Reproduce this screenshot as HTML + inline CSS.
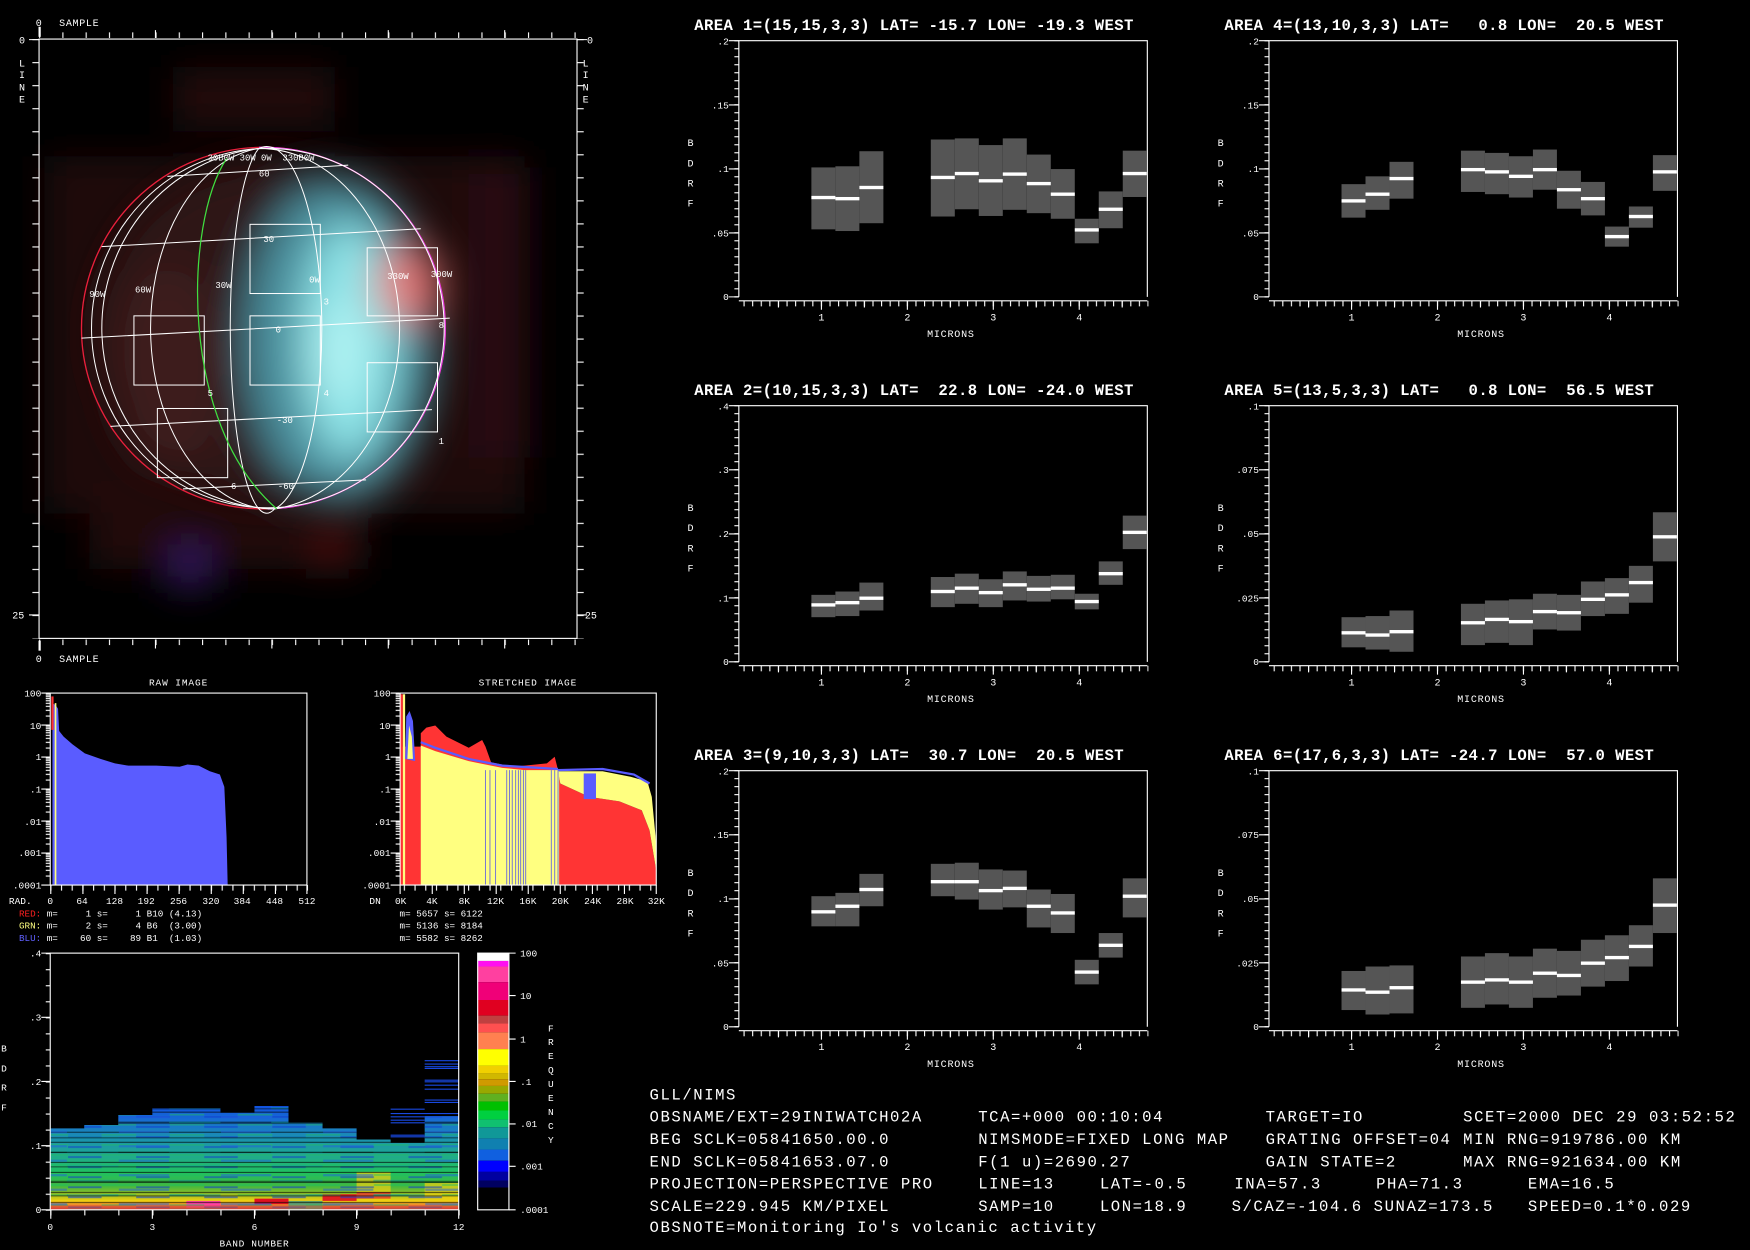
<!DOCTYPE html>
<html><head><meta charset="utf-8"><style>
html,body{margin:0;padding:0;background:#000;width:1750px;height:1250px;overflow:hidden}
svg{display:block}
text{font-family:"Liberation Mono","DejaVu Sans Mono",monospace;fill:#fff;white-space:pre}
</style></head><body>
<svg width="1750" height="1250" viewBox="0 0 1568 1120" xmlns="http://www.w3.org/2000/svg">
<defs>
<pattern id="pxt" x="666.2" y="0" width="7.7" height="400" patternUnits="userSpaceOnUse"><rect width="1" height="400" fill="#fff"/></pattern>
<pattern id="pyt" x="0" y="36" width="20" height="7.17" patternUnits="userSpaceOnUse"><rect width="20" height="1" fill="#fff"/></pattern>
<pattern id="ilt" x="0" y="35" width="20" height="20.64" patternUnits="userSpaceOnUse"><rect width="20" height="1" fill="#fff"/></pattern>
<pattern id="itt" x="35" y="0" width="20.86" height="600" patternUnits="userSpaceOnUse"><rect width="1" height="600" fill="#fff"/></pattern>
<pattern id="dlt" x="0" y="854" width="20" height="14.37" patternUnits="userSpaceOnUse"><rect width="20" height="1" fill="#fff"/></pattern>
<pattern id="dxt" x="45" y="0" width="30.5" height="1200" patternUnits="userSpaceOnUse"><rect width="1" height="1200" fill="#fff"/></pattern>
<pattern id="xt8" x="45" y="0" width="9.6" height="900" patternUnits="userSpaceOnUse"><rect width="1" height="900" fill="#fff"/></pattern>
<pattern id="lg" x="0" y="621" width="20" height="28.67" patternUnits="userSpaceOnUse"><g fill="#fff"><rect y="0" width="20" height="1"/><rect y="1.3" width="20" height="1"/><rect y="2.8" width="20" height="1"/><rect y="4.5" width="20" height="1"/><rect y="6.4" width="20" height="1"/><rect y="8.7" width="20" height="1"/><rect y="11.4" width="20" height="1"/><rect y="15" width="20" height="1"/><rect y="20.1" width="20" height="1"/></g></pattern>
<pattern id="st1" x="0" y="850" width="61" height="9" patternUnits="userSpaceOnUse"><rect y="2" width="61" height="1" fill="#000" opacity=".6"/><rect y="6" width="30" height="1.5" fill="#1040d0" opacity=".6"/><rect x="30" y="4" width="31" height="1.5" fill="#20c060" opacity=".5"/></pattern>
<pattern id="st2" x="15" y="853" width="91.5" height="13" patternUnits="userSpaceOnUse"><rect y="4" width="45" height="2" fill="#2060e0" opacity=".5"/><rect x="45" y="9" width="46" height="2" fill="#10a0a0" opacity=".5"/><rect y="10" width="91.5" height="1" fill="#000" opacity=".5"/></pattern>
<linearGradient id="dg" gradientUnits="userSpaceOnUse" x1="0" y1="950" x2="0" y2="1084">
<stop offset="0" stop-color="#1040e0"/><stop offset=".30" stop-color="#1050e0"/><stop offset=".41" stop-color="#1870d0"/><stop offset=".52" stop-color="#1a90b0"/><stop offset=".63" stop-color="#20a890"/><stop offset=".75" stop-color="#20c060"/><stop offset=".84" stop-color="#40b840"/><stop offset=".90" stop-color="#a0c020"/><stop offset=".94" stop-color="#f0d010"/><stop offset=".97" stop-color="#f08030"/><stop offset="1" stop-color="#e02040"/>
</linearGradient>
<clipPath id="dcl">
<rect x="45" y="1011" width="30.5" height="73"/><rect x="75.5" y="1008" width="30.5" height="76"/><rect x="106" y="999" width="30.5" height="85"/><rect x="136.5" y="993" width="30.5" height="91"/><rect x="167" y="993" width="30.5" height="91"/><rect x="197.5" y="997" width="30.5" height="87"/><rect x="228" y="991" width="30.5" height="93"/><rect x="258.5" y="1006" width="30.5" height="78"/><rect x="289" y="1011" width="30.5" height="73"/><rect x="319.5" y="1021" width="30.5" height="63"/><rect x="350" y="1024" width="30.5" height="60"/><rect x="380.5" y="1000" width="30.5" height="84"/>
</clipPath>
<filter id="bl" x="-30%" y="-30%" width="160%" height="160%"><feGaussianBlur stdDeviation="16"/></filter>
<filter id="bl2" x="-30%" y="-30%" width="160%" height="160%"><feGaussianBlur stdDeviation="18"/></filter>

<g id="ax" font-size="9">
<path d="M662 266V36.5H1028V266M662 269.5H1028" stroke="#fff" fill="none"/>
<rect x="662" y="269.5" width="367" height="5" fill="url(#pxt)"/>
<path d="M736 269.5v8M813 269.5v8M890 269.5v8M967 269.5v8M697.5 269.5v6M774.5 269.5v6M851.5 269.5v6M928.5 269.5v6M1005.5 269.5v6M653 36.5h9M653 94h9M653 151.4h9M653 208.7h9M653 266h9" stroke="#fff"/>
<rect x="658" y="36" width="4" height="231" fill="url(#pyt)"/>
<text x="736" y="287" text-anchor="middle">1</text><text x="813" y="287" text-anchor="middle">2</text><text x="890" y="287" text-anchor="middle">3</text><text x="967" y="287" text-anchor="middle">4</text>
<text x="852" y="302" text-anchor="middle" letter-spacing=".7">MICRONS</text>
<text x="616" y="131">B</text><text x="616" y="149">D</text><text x="616" y="167">R</text><text x="616" y="185">F</text>
</g>
</defs>

<!-- ================= LEFT IMAGE PANEL ================= -->
<g filter="url(#bl)" opacity=".8">
<rect x="155" y="60" width="145" height="55" fill="#2a0810"/>
<rect x="40" y="140" width="430" height="320" fill="#260a0e"/>
<rect x="420" y="150" width="55" height="260" fill="#321016"/>
<rect x="80" y="430" width="250" height="80" fill="#2c0a10"/>
<rect x="150" y="488" width="40" height="40" fill="#3a1e6a"/>
<rect x="284" y="484" width="22" height="22" fill="#6a1a1a"/>
</g>
<g filter="url(#bl2)">
<ellipse cx="238" cy="296" rx="150" ry="150" fill="#2e1618"/>
<ellipse cx="150" cy="330" rx="50" ry="90" fill="#3e1a1c"/>
<ellipse cx="305" cy="305" rx="85" ry="145" fill="#4a8e9c"/>
<ellipse cx="312" cy="305" rx="42" ry="105" fill="#8ee4e8"/>
<ellipse cx="305" cy="315" rx="22" ry="45" fill="#b0f2f2"/>
<ellipse cx="365" cy="255" rx="30" ry="36" fill="#e27878"/>
</g>
<!-- frame & ticks -->
<rect x="35" y="35" width="482" height="537" fill="none" stroke="#fff"/>
<rect x="29" y="35" width="6" height="537" fill="url(#ilt)"/>
<rect x="517" y="35" width="6" height="537" fill="url(#ilt)"/>
<rect x="35" y="29" width="482" height="5" fill="url(#itt)"/>
<rect x="35" y="573" width="482" height="5" fill="url(#itt)"/>
<path d="M139.3 27v7M243.6 27v7M347.9 27v7M452.2 27v7M139.3 573v8M243.6 573v8M347.9 573v8M452.2 573v8M26 35.5h9M517 35.5h9M26 551h9M517 551h9" stroke="#fff"/>
<rect x="34.5" y="24" width="2" height="9" fill="#fff"/><rect x="34.5" y="574" width="2" height="9" fill="#fff"/>
<g font-size="9">
<text x="32" y="23.5">0</text><text x="53" y="23.5" letter-spacing=".6">SAMPLE</text>
<text x="32" y="593">0</text><text x="53" y="593" letter-spacing=".6">SAMPLE</text>
<text x="17" y="39">0</text><text x="17" y="59.5">L</text><text x="17" y="70">I</text><text x="17" y="81">N</text><text x="17" y="92">E</text>
<text x="11" y="554">25</text>
<text x="526" y="39">0</text><text x="522" y="59.5">L</text><text x="522" y="70">I</text><text x="522" y="81">N</text><text x="522" y="92">E</text>
<text x="524" y="554">25</text>
</g>
<!-- sphere grid -->
<ellipse cx="236" cy="294" rx="163" ry="162" fill="none" stroke="#e8203c" stroke-width="1.2"/>
<path d="M232 132A163 162 0 0 1 240 456" fill="none" stroke="#e040e0" stroke-width="1.2"/>
<g fill="none" stroke="#fff" stroke-width="0.9">
<ellipse cx="240" cy="294" rx="158" ry="161"/>
<path d="M232 133A158 162 0 0 0 246 456"/>
<path d="M232 133A109 162 0 0 0 246 456"/>
<path d="M232 133A32 162 0 0 0 246 456"/>
<path d="M232 133A49 162 0 0 1 246 456"/>
<path d="M232 133A126 162 0 0 1 246 456"/>
<path d="M150 158L312 148M91 221L377 205M73 303L403 285M99 382L387 367M164 438L328 430"/>
<rect x="224" y="201" width="63" height="62"/><rect x="224" y="283" width="63" height="62"/><rect x="120" y="283" width="63" height="62"/>
<rect x="329" y="222" width="63" height="61"/><rect x="329" y="325" width="63" height="62"/><rect x="141" y="366" width="63" height="62"/>
</g>
<path d="M203 142C165 200 160 380 248 456" fill="none" stroke="#40e040" stroke-width="1.1"/>
<g font-size="8">
<text x="186" y="144">30B0W 30W 0W  330B0W</text>
<text x="232" y="158">60</text><text x="236" y="217">30</text><text x="277" y="253">0W</text><text x="290" y="273">3</text>
<text x="347" y="250">330W</text><text x="386" y="248">300W</text><text x="80" y="266">90W</text><text x="121" y="262">60W</text><text x="193" y="258">30W</text>
<text x="247" y="298">0</text><text x="393" y="294">8</text><text x="186" y="355">5</text><text x="290" y="355">4</text><text x="248" y="379">-30</text>
<text x="393" y="398">1</text><text x="207" y="438">6</text><text x="249" y="438">-60</text>
</g>

<!-- ================= HISTOGRAMS ================= -->
<g font-size="8.5">
<text x="160" y="614" text-anchor="middle" letter-spacing=".8">RAW IMAGE</text>
<text x="473" y="614" text-anchor="middle" letter-spacing=".8">STRETCHED IMAGE</text>
</g>
<path d="M47 793V630L50 632L52 635L53 655L57 660L65 667L76 675L90 680L103 684L115 686L140 686L161 687L168 685L178 686L188 691L197 694L201 705L203 750L204 793Z" fill="#5a5cff"/>
<rect x="49" y="630" width="1.5" height="163" fill="#ffff80"/><rect x="46" y="624" width="2" height="30" fill="#ff3030"/>
<rect x="45" y="621" width="230" height="172" fill="none" stroke="#fff"/>
<rect x="41" y="621" width="4" height="172" fill="url(#lg)"/>
<path d="M37 621h8M37 649.7h8M37 678.3h8M37 707h8M37 735.7h8M37 764.3h8M37 793h8" stroke="#fff"/>
<rect x="45" y="793" width="231" height="5" fill="url(#xt8)"/>
<path d="M45.5 793v8M74.3 793v8M103 793v8M131.8 793v8M160.5 793v8M189.3 793v8M218 793v8M246.8 793v8M275 793v8" stroke="#fff"/>
<g font-size="8.5">
<text x="37" y="624" text-anchor="end">100</text><text x="37" y="653" text-anchor="end">10</text><text x="37" y="681" text-anchor="end">1</text><text x="37" y="710" text-anchor="end">.1</text><text x="37" y="739" text-anchor="end">.01</text><text x="37" y="767" text-anchor="end">.001</text><text x="37" y="796" text-anchor="end">.0001</text>
<text x="8" y="810">RAD.</text>
<text x="45" y="810" text-anchor="middle">0</text><text x="73.5" y="810" text-anchor="middle">64</text><text x="102.6" y="810" text-anchor="middle">128</text><text x="131" y="810" text-anchor="middle">192</text><text x="160" y="810" text-anchor="middle">256</text><text x="189" y="810" text-anchor="middle">320</text><text x="217" y="810" text-anchor="middle">384</text><text x="246" y="810" text-anchor="middle">448</text><text x="275" y="810" text-anchor="middle">512</text>
</g>
<g font-size="8.3">
<text x="17" y="821"><tspan fill="#ff2020">RED:</tspan> m=     1 s=     1 B10 (4.13)</text>
<text x="17" y="832"><tspan fill="#ffff80">GRN:</tspan> m=     2 s=     4 B6  (3.00)</text>
<text x="17" y="843"><tspan fill="#6060ff">BLU:</tspan> m=    60 s=    89 B1  (1.03)</text>
<text x="358" y="821">m= 5657 s= 6122</text>
<text x="358" y="832">m= 5136 s= 8184</text>
<text x="358" y="843">m= 5582 s= 8262</text>
</g>
<path d="M358.5 793V622H361V669H377V657L382 652L390 650L400 660L420 670L432 663L435 669L440 683L460 687L490 684L497 678L500 690L502 702L528 714L555 718L575 726L582 744L588 780V793Z" fill="#ff3434"/>
<path d="M377 793V668L390 673L420 682L450 688L470 690L501 690V793Z" fill="#ffff80"/>
<path d="M500 691L540 691L565 696L580 700L584 714L588 756L588 780L582 744L575 726L555 718L528 714L502 702Z" fill="#ffff80"/>
<path d="M377 665L390 670L420 680L450 686L500 689M500 690L540 689L568 694L582 702" fill="none" stroke="#5a5cff" stroke-width="2"/>
<rect x="523" y="693" width="11" height="23" fill="#5a5cff"/>
<path d="M435 690V793M439 690V793M444 690V793M454 690V793M456.5 690V793M459 690V793M462 690V793M464.5 690V793M466.5 690V793M469 690V793M471 690V793M494 690V793M497 690V793M500 690V793" stroke="#7a7ad0" stroke-width=".9"/>
<path d="M361 793V622H363V793Z" fill="#ffff80"/>
<path d="M363 680L364 642L367 637L370 646L372 682Z" fill="#5a5cff"/>
<path d="M365 680L366.5 650L369 660L370 680Z" fill="#ffff80"/>
<rect x="358.5" y="621" width="229.5" height="172" fill="none" stroke="#fff"/>
<rect x="354.5" y="621" width="4" height="172" fill="url(#lg)"/>
<path d="M350 621h8M350 649.7h8M350 678.3h8M350 707h8M350 735.7h8M350 764.3h8M350 793h8" stroke="#fff"/>
<rect x="358.5" y="793" width="230" height="5" fill="url(#xt8)"/>
<path d="M358.5 793v8M387.3 793v8M416 793v8M444.6 793v8M473.3 793v8M502 793v8M530.8 793v8M559.5 793v8M588 793v8" stroke="#fff"/>
<g font-size="8.5">
<text x="350" y="624" text-anchor="end">100</text><text x="350" y="653" text-anchor="end">10</text><text x="350" y="681" text-anchor="end">1</text><text x="350" y="710" text-anchor="end">.1</text><text x="350" y="739" text-anchor="end">.01</text><text x="350" y="767" text-anchor="end">.001</text><text x="350" y="796" text-anchor="end">.0001</text>
<text x="331" y="810">DN</text>
<text x="359" y="810" text-anchor="middle">0K</text><text x="387" y="810" text-anchor="middle">4K</text><text x="416" y="810" text-anchor="middle">8K</text><text x="444" y="810" text-anchor="middle">12K</text><text x="473" y="810" text-anchor="middle">16K</text><text x="502" y="810" text-anchor="middle">20K</text><text x="531" y="810" text-anchor="middle">24K</text><text x="560" y="810" text-anchor="middle">28K</text><text x="588" y="810" text-anchor="middle">32K</text>
</g>

<!-- ================= DENSITY PLOT ================= -->
<g clip-path="url(#dcl)">
<rect x="45" y="985" width="366" height="99" fill="url(#dg)"/>
<rect x="319.5" y="1050" width="30.5" height="28" fill="#f0d010" opacity=".7"/>
<rect x="319.5" y="1068" width="30.5" height="6" fill="#e03030" opacity=".8"/>
<rect x="380.5" y="1060" width="30.5" height="15" fill="#f0d010" opacity=".7"/>
<rect x="167" y="1076" width="30.5" height="6" fill="#ff40a0"/>
<rect x="228" y="1074" width="30.5" height="5" fill="#e01020"/>
<rect x="258.5" y="1076" width="30.5" height="8" fill="#60a070"/>
<rect x="289" y="1070" width="30.5" height="6" fill="#e02020"/>
<rect x="45" y="985" width="366" height="99" fill="url(#st1)"/>
<rect x="45" y="985" width="366" height="99" fill="url(#st2)"/>
<rect x="45" y="1080" width="366" height="4" fill="#d05030" opacity=".5"/>
</g>
<path d="M350 993.8h30.5M350 997.7h30.5M350 1000.7h30.5M350 1003.7h30.5M350 1006h30.5M350 1017.1h30.5M350 1018.6h30.5M380.5 950.4h30.5M380.5 953.4h30.5M380.5 955.8h30.5M380.5 957.3h30.5M380.5 967.8h30.5M380.5 969.3h30.5M380.5 972.3h30.5M380.5 975.9h30.5M380.5 985.7h30.5M380.5 987.8h30.5M380.5 997.7h30.5" stroke="#1848e0" stroke-width="1"/>
<rect x="45" y="854" width="366" height="230" fill="none" stroke="#fff"/>
<rect x="41" y="854" width="4" height="231" fill="url(#dlt)"/>
<path d="M37 854h8M37 911.5h8M37 969h8M37 1026.5h8M37 1084h8" stroke="#fff"/>
<rect x="45" y="1084" width="367" height="5" fill="url(#dxt)"/>
<path d="M45.5 1084v8M136.5 1084v8M228 1084v8M319.5 1084v8M411 1084v8" stroke="#fff"/>
<g font-size="8.5">
<text x="37" y="857" text-anchor="end">.4</text><text x="37" y="914.5" text-anchor="end">.3</text><text x="37" y="972" text-anchor="end">.2</text><text x="37" y="1029.5" text-anchor="end">.1</text><text x="37" y="1087" text-anchor="end">0</text>
<text x="1" y="942">B</text><text x="1" y="960">D</text><text x="1" y="977">R</text><text x="1" y="995">F</text>
<text x="45" y="1102" text-anchor="middle">0</text><text x="136.5" y="1102" text-anchor="middle">3</text><text x="228" y="1102" text-anchor="middle">6</text><text x="319.5" y="1102" text-anchor="middle">9</text><text x="411" y="1102" text-anchor="middle">12</text>
<text x="228" y="1117" text-anchor="middle" letter-spacing=".6">BAND NUMBER</text>
</g>
<g>
<rect x="428" y="854" width="28" height="7" fill="#fff"/>
<rect x="428" y="861" width="28" height="5" fill="#ff10f0"/>
<rect x="428" y="866" width="28" height="14" fill="#ff40a0"/>
<rect x="428" y="880" width="28" height="16" fill="#f00078"/>
<rect x="428" y="896" width="28" height="14" fill="#e00020"/>
<rect x="428" y="910" width="28" height="7" fill="#c04040"/>
<rect x="428" y="917" width="28" height="8" fill="#ff5050"/>
<rect x="428" y="925" width="28" height="15" fill="#ff8050"/>
<rect x="428" y="940" width="28" height="15" fill="#ffff00"/>
<rect x="428" y="955" width="28" height="7" fill="#f0d000"/>
<rect x="428" y="962" width="28" height="5" fill="#d0b800"/>
<rect x="428" y="967" width="28" height="6" fill="#d09a00"/>
<rect x="428" y="973" width="28" height="7" fill="#98a800"/>
<rect x="428" y="980" width="28" height="7" fill="#60b020"/>
<rect x="428" y="987" width="28" height="8" fill="#00c000"/>
<rect x="428" y="995" width="28" height="8" fill="#00d040"/>
<rect x="428" y="1003" width="28" height="7" fill="#10c070"/>
<rect x="428" y="1010" width="28" height="10" fill="#109898"/>
<rect x="428" y="1020" width="28" height="10" fill="#1080b0"/>
<rect x="428" y="1030" width="28" height="10" fill="#1060e0"/>
<rect x="428" y="1040" width="28" height="10" fill="#0000ff"/>
<rect x="428" y="1050" width="28" height="8" fill="#0000a0"/>
<rect x="428" y="1058" width="28" height="6" fill="#000060"/>
<rect x="428" y="854" width="28" height="230" fill="none" stroke="#fff"/>
<path d="M456 854h6M456 892h6M456 931h6M456 969h6M456 1007h6M456 1045h6M456 1084h6" stroke="#fff"/>
</g>
<g font-size="8.5">
<text x="466" y="857">100</text><text x="466" y="895">10</text><text x="466" y="934">1</text><text x="466" y="972">.1</text><text x="466" y="1010">.01</text><text x="466" y="1048">.001</text><text x="466" y="1087">.0001</text>
<text x="491" y="924">F</text><text x="491" y="936.5">R</text><text x="491" y="949">E</text><text x="491" y="961.5">Q</text><text x="491" y="974">U</text><text x="491" y="986.5">E</text><text x="491" y="999">N</text><text x="491" y="1011.5">C</text><text x="491" y="1024">Y</text>
</g>

<!-- ================= AREA PLOTS ================= -->
<g font-size="14" font-weight="bold" letter-spacing=".36">
<text x="622" y="27">AREA 1=(15,15,3,3) LAT= -15.7 LON= -19.3 WEST</text>
<text x="1097" y="27">AREA 4=(13,10,3,3) LAT=   0.8 LON=  20.5 WEST</text>
<text x="622" y="354">AREA 2=(10,15,3,3) LAT=  22.8 LON= -24.0 WEST</text>
<text x="1097" y="354">AREA 5=(13,5,3,3) LAT=   0.8 LON=  56.5 WEST</text>
<text x="622" y="681">AREA 3=(9,10,3,3) LAT=  30.7 LON=  20.5 WEST</text>
<text x="1097" y="681">AREA 6=(17,6,3,3) LAT= -24.7 LON=  57.0 WEST</text>
</g>
<use href="#ax"/>
<use href="#ax" transform="translate(475,0)"/>
<use href="#ax" transform="translate(0,327)"/>
<use href="#ax" transform="translate(475,327)"/>
<use href="#ax" transform="translate(0,654)"/>
<use href="#ax" transform="translate(475,654)"/>
<g font-size="8.5" text-anchor="end">
<text x="653" y="40">.2</text><text x="653" y="97">.15</text><text x="653" y="154">.1</text><text x="653" y="212">.05</text><text x="653" y="269">0</text>
<text x="1128" y="40">.2</text><text x="1128" y="97">.15</text><text x="1128" y="154">.1</text><text x="1128" y="212">.05</text><text x="1128" y="269">0</text>
<text x="653" y="367">.4</text><text x="653" y="424">.3</text><text x="653" y="481">.2</text><text x="653" y="539">.1</text><text x="653" y="596">0</text>
<text x="1128" y="367">.1</text><text x="1128" y="424">.075</text><text x="1128" y="481">.05</text><text x="1128" y="539">.025</text><text x="1128" y="596">0</text>
<text x="653" y="694">.2</text><text x="653" y="751">.15</text><text x="653" y="808">.1</text><text x="653" y="866">.05</text><text x="653" y="923">0</text>
<text x="1128" y="694">.1</text><text x="1128" y="751">.075</text><text x="1128" y="808">.05</text><text x="1128" y="866">.025</text><text x="1128" y="923">0</text>
</g>
<g fill="#555">
<rect x="727" y="150" width="21.5" height="55.5"/><rect x="748.5" y="149" width="21.5" height="58"/><rect x="770" y="135.5" width="21.5" height="64.5"/>
<rect x="834" y="125" width="21.5" height="69"/><rect x="855.5" y="124" width="21.5" height="63.5"/><rect x="877" y="130" width="21.5" height="63.5"/><rect x="898.5" y="124" width="21.5" height="64"/><rect x="920" y="138.5" width="21.5" height="52.5"/><rect x="941.5" y="151.5" width="21.5" height="44.5"/><rect x="963" y="196" width="21.5" height="22"/><rect x="984.5" y="171.5" width="21.5" height="33"/><rect x="1006" y="135" width="21.5" height="41.5"/>
</g>
<g fill="#fff">
<rect x="727" y="175.5" width="21.5" height="3"/><rect x="748.5" y="176.5" width="21.5" height="3"/><rect x="770" y="166.5" width="21.5" height="3"/>
<rect x="834" y="157.5" width="21.5" height="3"/><rect x="855.5" y="154" width="21.5" height="3"/><rect x="877" y="160.5" width="21.5" height="3"/><rect x="898.5" y="154.5" width="21.5" height="3"/><rect x="920" y="163" width="21.5" height="3"/><rect x="941.5" y="172.5" width="21.5" height="3"/><rect x="963" y="204.5" width="21.5" height="3"/><rect x="984.5" y="186" width="21.5" height="3"/><rect x="1006" y="154" width="21.5" height="3"/>
</g>
<g fill="#555">
<rect x="727" y="533" width="21.5" height="20"/><rect x="748.5" y="530" width="21.5" height="22"/><rect x="770" y="522" width="21.5" height="25"/>
<rect x="834" y="517" width="21.5" height="27"/><rect x="855.5" y="514" width="21.5" height="27"/><rect x="877" y="519" width="21.5" height="25"/><rect x="898.5" y="512" width="21.5" height="26"/><rect x="920" y="516" width="21.5" height="23"/><rect x="941.5" y="515" width="21.5" height="22"/><rect x="963" y="532" width="21.5" height="14"/><rect x="984.5" y="503" width="21.5" height="21"/><rect x="1006" y="462" width="21.5" height="30"/>
</g>
<g fill="#fff">
<rect x="727" y="540.5" width="21.5" height="3"/><rect x="748.5" y="538.5" width="21.5" height="3"/><rect x="770" y="534.5" width="21.5" height="3"/>
<rect x="834" y="528.5" width="21.5" height="3"/><rect x="855.5" y="525.5" width="21.5" height="3"/><rect x="877" y="529.5" width="21.5" height="3"/><rect x="898.5" y="522.5" width="21.5" height="3"/><rect x="920" y="526.5" width="21.5" height="3"/><rect x="941.5" y="525.5" width="21.5" height="3"/><rect x="963" y="537.5" width="21.5" height="3"/><rect x="984.5" y="512.5" width="21.5" height="3"/><rect x="1006" y="475.5" width="21.5" height="3"/>
</g>
<g fill="#555">
<rect x="727" y="803" width="21.5" height="27"/><rect x="748.5" y="800" width="21.5" height="30"/><rect x="770" y="783" width="21.5" height="29"/>
<rect x="834" y="774" width="21.5" height="29"/><rect x="855.5" y="773" width="21.5" height="33"/><rect x="877" y="779" width="21.5" height="36"/><rect x="898.5" y="780" width="21.5" height="33"/><rect x="920" y="797" width="21.5" height="34"/><rect x="941.5" y="801" width="21.5" height="35"/><rect x="963" y="860" width="21.5" height="22"/><rect x="984.5" y="836" width="21.5" height="22"/><rect x="1006" y="787" width="21.5" height="35"/>
</g>
<g fill="#fff">
<rect x="727" y="815.5" width="21.5" height="3"/><rect x="748.5" y="810.5" width="21.5" height="3"/><rect x="770" y="795.5" width="21.5" height="3"/>
<rect x="834" y="788.5" width="21.5" height="3"/><rect x="855.5" y="788.5" width="21.5" height="3"/><rect x="877" y="796.5" width="21.5" height="3"/><rect x="898.5" y="794.5" width="21.5" height="3"/><rect x="920" y="810.5" width="21.5" height="3"/><rect x="941.5" y="816.5" width="21.5" height="3"/><rect x="963" y="869.5" width="21.5" height="3"/><rect x="984.5" y="845.5" width="21.5" height="3"/><rect x="1006" y="801.5" width="21.5" height="3"/>
</g>
<g transform="translate(475,0)">
<g fill="#555">
<rect x="727" y="165" width="21.5" height="30"/><rect x="748.5" y="158" width="21.5" height="30"/><rect x="770" y="145" width="21.5" height="33"/>
<rect x="834" y="135" width="21.5" height="37"/><rect x="855.5" y="137" width="21.5" height="37"/><rect x="877" y="140" width="21.5" height="37"/><rect x="898.5" y="134" width="21.5" height="36"/><rect x="920" y="153" width="21.5" height="34"/><rect x="941.5" y="163" width="21.5" height="30"/><rect x="963" y="203" width="21.5" height="18"/><rect x="984.5" y="185" width="21.5" height="19"/><rect x="1006" y="139" width="21.5" height="32"/>
</g>
<g fill="#fff">
<rect x="727" y="178.5" width="21.5" height="3"/><rect x="748.5" y="172.5" width="21.5" height="3"/><rect x="770" y="158.5" width="21.5" height="3"/>
<rect x="834" y="150.5" width="21.5" height="3"/><rect x="855.5" y="152.5" width="21.5" height="3"/><rect x="877" y="156.5" width="21.5" height="3"/><rect x="898.5" y="150.5" width="21.5" height="3"/><rect x="920" y="168.5" width="21.5" height="3"/><rect x="941.5" y="176.5" width="21.5" height="3"/><rect x="963" y="210.5" width="21.5" height="3"/><rect x="984.5" y="192.5" width="21.5" height="3"/><rect x="1006" y="152.5" width="21.5" height="3"/>
</g>
<g fill="#555">
<rect x="727" y="553" width="21.5" height="27"/><rect x="748.5" y="552" width="21.5" height="30"/><rect x="770" y="547" width="21.5" height="37"/>
<rect x="834" y="541" width="21.5" height="37"/><rect x="855.5" y="538" width="21.5" height="38"/><rect x="877" y="537" width="21.5" height="41"/><rect x="898.5" y="532" width="21.5" height="32"/><rect x="920" y="533" width="21.5" height="32"/><rect x="941.5" y="521" width="21.5" height="31"/><rect x="963" y="518" width="21.5" height="32"/><rect x="984.5" y="507" width="21.5" height="33"/><rect x="1006" y="459" width="21.5" height="44"/>
</g>
<g fill="#fff">
<rect x="727" y="565.5" width="21.5" height="3"/><rect x="748.5" y="567.5" width="21.5" height="3"/><rect x="770" y="564.5" width="21.5" height="3"/>
<rect x="834" y="556.5" width="21.5" height="3"/><rect x="855.5" y="553.5" width="21.5" height="3"/><rect x="877" y="555.5" width="21.5" height="3"/><rect x="898.5" y="546.5" width="21.5" height="3"/><rect x="920" y="547.5" width="21.5" height="3"/><rect x="941.5" y="535.5" width="21.5" height="3"/><rect x="963" y="531.5" width="21.5" height="3"/><rect x="984.5" y="520.5" width="21.5" height="3"/><rect x="1006" y="479.5" width="21.5" height="3"/>
</g>
<g fill="#555">
<rect x="727" y="870" width="21.5" height="35"/><rect x="748.5" y="866" width="21.5" height="43"/><rect x="770" y="865" width="21.5" height="43"/>
<rect x="834" y="857" width="21.5" height="46"/><rect x="855.5" y="854" width="21.5" height="46"/><rect x="877" y="857" width="21.5" height="46"/><rect x="898.5" y="850" width="21.5" height="44"/><rect x="920" y="852" width="21.5" height="40"/><rect x="941.5" y="842" width="21.5" height="42"/><rect x="963" y="838" width="21.5" height="41"/><rect x="984.5" y="829" width="21.5" height="37"/><rect x="1006" y="787" width="21.5" height="49"/>
</g>
<g fill="#fff">
<rect x="727" y="885.5" width="21.5" height="3"/><rect x="748.5" y="887.5" width="21.5" height="3"/><rect x="770" y="883.5" width="21.5" height="3"/>
<rect x="834" y="878.5" width="21.5" height="3"/><rect x="855.5" y="876.5" width="21.5" height="3"/><rect x="877" y="878.5" width="21.5" height="3"/><rect x="898.5" y="870.5" width="21.5" height="3"/><rect x="920" y="872.5" width="21.5" height="3"/><rect x="941.5" y="861.5" width="21.5" height="3"/><rect x="963" y="856.5" width="21.5" height="3"/><rect x="984.5" y="846.5" width="21.5" height="3"/><rect x="1006" y="809.5" width="21.5" height="3"/>
</g>
</g>

<!-- ================= TEXT BLOCK ================= -->
<g font-size="14" letter-spacing="1.4">
<text x="582" y="985">GLL/NIMS</text>
<text x="582" y="1005">OBSNAME/EXT=29INIWATCH02A</text><text x="876.5" y="1005">TCA=+000 00:10:04</text><text x="1134" y="1005">TARGET=IO</text><text x="1311" y="1005">SCET=2000 DEC 29 03:52:52</text>
<text x="582" y="1025">BEG SCLK=05841650.00.0</text><text x="876.5" y="1025">NIMSMODE=FIXED LONG MAP</text><text x="1134" y="1025">GRATING OFFSET=04</text><text x="1311" y="1025">MIN RNG=919786.00 KM</text>
<text x="582" y="1045">END SCLK=05841653.07.0</text><text x="876.5" y="1045">F(1 u)=2690.27</text><text x="1134" y="1045">GAIN STATE=2</text><text x="1311" y="1045">MAX RNG=921634.00 KM</text>
<text x="582" y="1065">PROJECTION=PERSPECTIVE PRO</text><text x="876.5" y="1065">LINE=13</text><text x="985.5" y="1065">LAT=-0.5</text><text x="1106" y="1065">INA=57.3</text><text x="1233" y="1065">PHA=71.3</text><text x="1369" y="1065">EMA=16.5</text>
<text x="582" y="1085">SCALE=229.945 KM/PIXEL</text><text x="876.5" y="1085">SAMP=10</text><text x="985.5" y="1085">LON=18.9</text><text x="1103.5" y="1085">S/CAZ=-104.6 SUNAZ=173.5</text><text x="1369" y="1085">SPEED=0.1*0.029</text>
<text x="582" y="1104">OBSNOTE=Monitoring Io's volcanic activity</text>
</g>
</svg>
</body></html>
